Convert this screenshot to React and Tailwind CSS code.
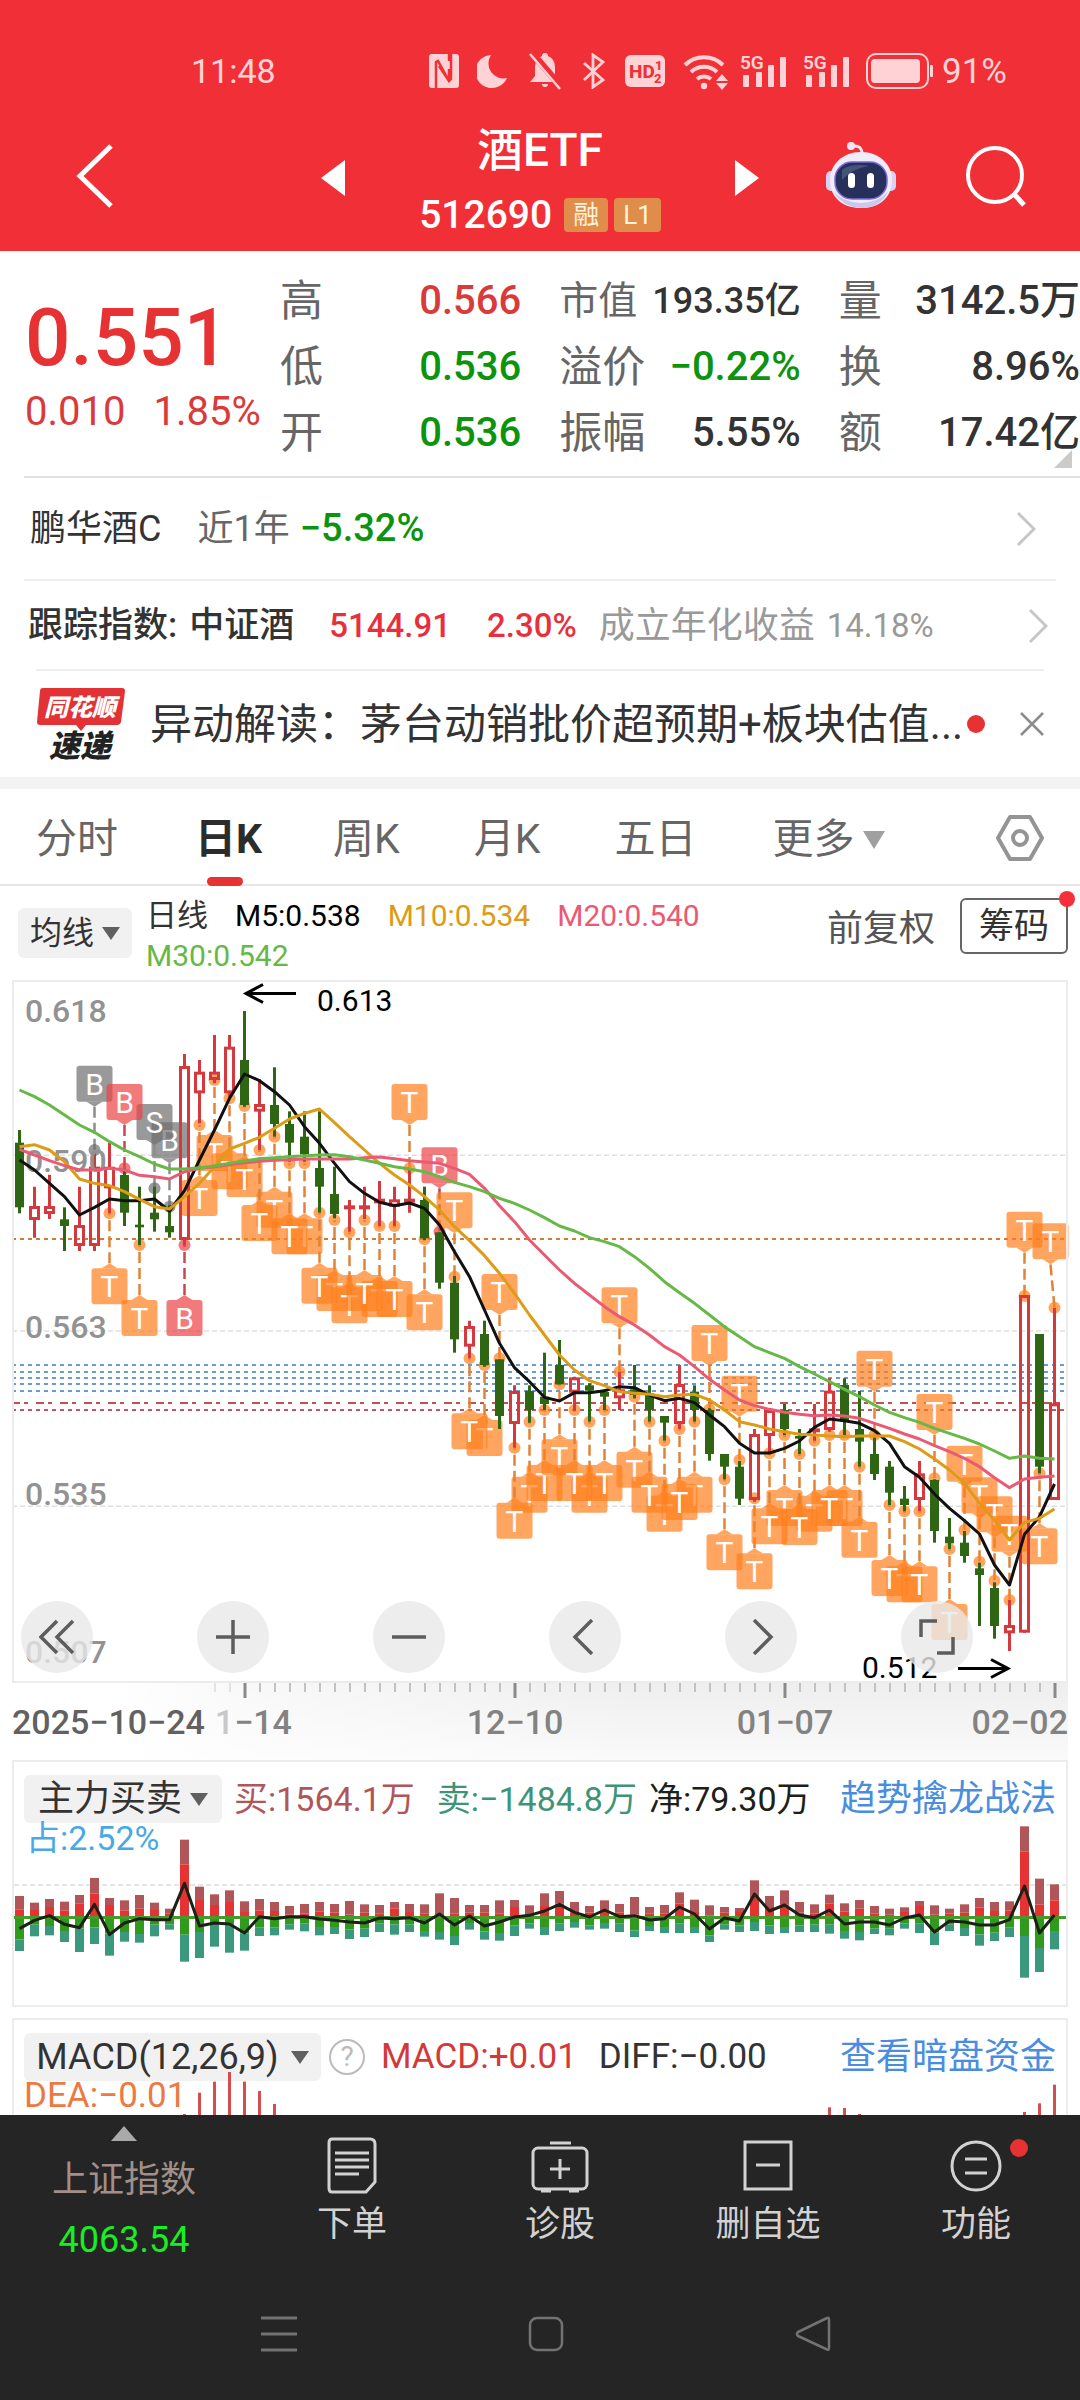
import React from "react";

const STEP = 15;
const X0 = 19.5;
const cx = (i) => X0 + i * STEP;

// Chart values are stored as vertical units, three to a pixel.
const u = (v) => v / 3;

// [rising, high, body top, body bottom, low]
const CANDLES = [
  [0, 480, 518, 712, 730], [1, 650, 708, 750, 803], [1, 614, 708, 732, 747], [0, 712, 748, 768, 843],
  [1, 650, 765, 828, 843], [1, 545, 590, 828, 843], [1, 518, 590, 655, 730], [0, 595, 615, 728, 768],
  [0, 650, 764, 772, 825], [0, 650, 728, 748, 785], [0, 705, 768, 787, 803], [1, 252, 288, 810, 825],
  [1, 270, 305, 370, 460], [1, 195, 305, 330, 340], [1, 195, 230, 370, 385], [0, 123, 270, 405, 410],
  [1, 328, 402, 425, 540], [0, 292, 405, 462, 500], [0, 424, 462, 518, 575], [0, 424, 500, 553, 575],
  [0, 424, 594, 650, 728], [0, 590, 672, 732, 745], [1, 690, 706, 716, 785], [1, 650, 706, 716, 747],
  [1, 633, 686, 700, 768], [1, 650, 688, 710, 768], [1, 595, 686, 698, 728], [0, 650, 690, 805, 810],
  [0, 787, 787, 938, 956], [0, 918, 938, 1108, 1148], [1, 1052, 1068, 1130, 1165], [0, 1052, 1092, 1185, 1190],
  [0, 1168, 1168, 1338, 1377], [1, 1246, 1263, 1362, 1433], [0, 1246, 1263, 1320, 1358], [0, 1148, 1280, 1302, 1320],
  [0, 1110, 1185, 1243, 1243], [1, 1220, 1222, 1268, 1322], [0, 1240, 1246, 1262, 1355], [0, 1258, 1266, 1280, 1320],
  [1, 1205, 1258, 1285, 1320], [0, 1185, 1258, 1275, 1285], [0, 1246, 1270, 1320, 1355], [0, 1338, 1338, 1358, 1412],
  [1, 1185, 1242, 1362, 1377], [0, 1246, 1265, 1320, 1355], [0, 1315, 1320, 1452, 1472], [0, 1452, 1452, 1490, 1528],
  [0, 1473, 1490, 1586, 1605], [1, 1377, 1392, 1590, 1595], [1, 1320, 1320, 1398, 1450], [0, 1302, 1320, 1377, 1395],
  [0, 1377, 1398, 1406, 1452], [1, 1302, 1375, 1382, 1412], [1, 1225, 1262, 1380, 1385], [0, 1225, 1245, 1355, 1395],
  [0, 1263, 1377, 1415, 1490], [0, 1402, 1452, 1512, 1530], [0, 1473, 1490, 1568, 1605], [0, 1548, 1586, 1605, 1624],
  [1, 1473, 1510, 1590, 1624], [0, 1528, 1530, 1683, 1718], [0, 1644, 1700, 1720, 1737], [0, 1683, 1718, 1758, 1778],
  [0, 1778, 1795, 1815, 1968], [0, 1837, 1854, 1968, 2006], [1, 1890, 1965, 1990, 2043], [1, 975, 975, 1988, 1988],
  [0, 1092, 1092, 1490, 1510], [1, 1013, 1300, 1590, 1590],
];

// [index, anchor, letter, tone, side, horizontal nudge of the flag]; later entries lie on top
const MARKERS = [
  [13, 330], [14, 385], [17, 500], [19, 580], [21, 750], [22, 787], [24, 768], [31, 1185], [34, 1355], [38, 1355],
  [43, 1412], [45, 1355], [53, 1412], [55, 1395], [59, 1624], [60, 1624],
  [10, 710, "B", "gray", "up"], [9, 655, "S", "gray", "up"], [5, 540, "B", "gray", "up"], [7, 595, "B", "red", "up"],
  [6, 730], [8, 825], [11, 825, "B", "red", "down"], [12, 465], [15, 408],
  [16, 540], [18, 580], [20, 728], [23, 750], [25, 768], [27, 808],
  [26, 595, "T", "orange", "up"], [28, 785, "B", "red", "up"], [29, 920, "T", "orange", "up"], [32, 1165, "T", "orange", "up"],
  [30, 1165], [33, 1433], [35, 1320], [36, 1243], [37, 1320], [39, 1320],
  [40, 1205, "T", "orange", "up"], [41, 1280], [42, 1355], [44, 1377],
  [46, 1318, "T", "orange", "up"], [47, 1528], [48, 1470, "T", "orange", "up"], [49, 1585], [51, 1395], [50, 1450],
  [52, 1452], [54, 1395], [56, 1490], [57, 1395, "T", "orange", "up"], [58, 1605],
  [61, 1525, "T", "orange", "up"], [62, 1737], [63, 1680, "T", "orange", "up"], [64, 1775, "T", "orange", "up"],
  [65, 1832, "T", "orange", "up"], [66, 1890, "T", "orange", "up"], [67, 978, "T", "orange", "up"], [68, 1510],
  [69, 1013, "T", "orange", "up", -4],
];

const TONES = { orange: "#ff7f1d", red: "#ec4045", gray: "#6e6e6e" };
const STEMS = { orange: "#e08238", red: "#c9454f", gray: "#8d8d8d" };

const MA5 = [570, 600, 640, 680, 735, 712, 687, 692, 692, 687, 723, 662, 570, 480, 385, 312, 332, 365, 405, 470, 520, 580, 635, 670, 697, 707, 699, 715, 765, 845, 920, 1020, 1120, 1193, 1235, 1282, 1293, 1268, 1268, 1262, 1250, 1253, 1275, 1292, 1285, 1298, 1335, 1370, 1420, 1449, 1449, 1435, 1413, 1372, 1347, 1352, 1360, 1382, 1420, 1490, 1522, 1572, 1615, 1652, 1692, 1785, 1845, 1693, 1640, 1542];
const MA10 = [530, 524, 540, 575, 627, 640, 647, 665, 688, 710, 717, 680, 640, 590, 537, 520, 502, 475, 447, 430, 417, 458, 500, 540, 580, 615, 645, 680, 720, 770, 812, 857, 910, 970, 1035, 1095, 1155, 1200, 1232, 1247, 1265, 1270, 1273, 1280, 1275, 1273, 1290, 1320, 1355, 1365, 1377, 1385, 1393, 1395, 1398, 1400, 1398, 1398, 1398, 1415, 1437, 1467, 1500, 1540, 1600, 1650, 1710, 1657, 1645, 1617];
const MA20 = [538, 555, 572, 587, 600, 600, 595, 600, 616, 620, 627, 605, 595, 590, 584, 578, 574, 571, 569, 567, 567, 567, 567, 563, 561, 566, 572, 576, 580, 595, 613, 655, 707, 755, 810, 855, 900, 940, 975, 1010, 1040, 1065, 1095, 1130, 1155, 1190, 1228, 1260, 1290, 1307, 1318, 1327, 1333, 1337, 1335, 1338, 1345, 1360, 1375, 1392, 1407, 1427, 1445, 1465, 1490, 1523, 1553, 1527, 1522, 1518];
const MA30 = [360, 380, 405, 435, 465, 487, 515, 540, 560, 582, 597, 597, 593, 588, 580, 573, 566, 563, 560, 557, 555, 554, 560, 570, 580, 590, 597, 605, 620, 637, 650, 665, 685, 700, 720, 743, 768, 783, 803, 815, 830, 860, 895, 935, 968, 1000, 1035, 1070, 1100, 1130, 1148, 1165, 1190, 1212, 1235, 1258, 1280, 1305, 1327, 1343, 1357, 1375, 1390, 1405, 1422, 1443, 1465, 1458, 1465, 1467];

// [buy top, large buy top, large sell bottom, sell bottom]
const FLOWS = [
  [462, 502, 592, 627], [482, 504, 548, 583], [471, 495, 552, 580], [479, 505, 567, 600], [459, 484, 560, 630],
  [408, 455, 556, 606], [468, 489, 575, 641], [475, 505, 570, 599], [459, 500, 576, 602], [482, 504, 548, 583],
  [500, 514, 547, 563], [293, 367, 578, 659], [434, 474, 570, 648], [457, 489, 545, 614], [445, 480, 548, 632],
  [478, 510, 574, 626], [471, 505, 557, 582], [480, 507, 557, 580], [492, 518, 548, 563], [486, 514, 545, 568],
  [480, 508, 555, 580], [486, 512, 555, 576], [477, 518, 562, 591], [487, 512, 560, 585], [489, 514, 545, 570],
  [480, 499, 547, 578], [486, 510, 548, 570], [487, 514, 567, 584], [454, 520, 570, 593], [468, 515, 582, 609],
  [489, 512, 543, 563], [489, 512, 568, 593], [475, 514, 573, 596], [474, 495, 550, 582], [490, 518, 545, 560],
  [454, 492, 555, 579], [447, 485, 545, 567], [480, 512, 540, 557], [492, 512, 550, 563], [475, 505, 543, 560],
  [486, 512, 545, 570], [465, 518, 565, 585], [495, 514, 552, 567], [489, 514, 555, 573], [451, 485, 545, 573],
  [473, 510, 555, 573], [490, 520, 580, 600], [495, 512, 548, 563], [498, 510, 550, 570], [415, 465, 540, 567],
  [462, 495, 550, 576], [445, 487, 555, 573], [480, 512, 550, 570], [487, 514, 548, 570], [458, 484, 548, 575],
  [484, 508, 567, 590], [474, 500, 570, 595], [492, 514, 560, 576], [500, 518, 560, 580], [496, 510, 545, 560],
  [477, 492, 545, 573], [490, 518, 572, 609], [500, 514, 548, 567], [487, 512, 558, 582], [468, 497, 577, 611],
  [480, 507, 572, 597], [478, 505, 557, 585], [253, 328, 582, 707], [410, 488, 618, 690], [427, 475, 567, 622],
];
const NET = [560, 535, 521, 547, 557, 487, 578, 543, 530, 533, 533, 424, 552, 543, 546, 573, 524, 530, 524, 524, 531, 535, 540, 543, 528, 530, 527, 543, 516, 549, 522, 552, 540, 525, 520, 507, 487, 511, 525, 504, 524, 521, 534, 530, 495, 516, 561, 528, 537, 456, 507, 489, 519, 527, 504, 546, 540, 540, 549, 528, 519, 570, 537, 540, 549, 549, 533, 432, 573, 519];

// [index, bar top]
const MACD = [[11, 1122], [12, 1058], [13, 1025], [14, 996], [15, 1025], [16, 1053], [17, 1092], [54, 1102], [55, 1104], [56, 1122], [67, 1116], [68, 1090], [69, 1034]];

const toPoints = (arr) => arr.map((v, i) => `${cx(i)},${u(v)}`).join(" ");

function Marker({ i, y, letter = "T", tone = "orange", side = "down", nudge = 0 }) {
  const x = cx(i);
  const bx = x + nudge;
  const dot = u(y);
  const top = side === "up" ? u(y - 253) : u(y + 165);
  const tip = side === "up" ? top + 41 : top - 5;
  const base = side === "up" ? top + 36 : top;
  return (
    <g>
      <line x1={bx} y1={tip} x2={x} y2={dot} stroke={STEMS[tone]} strokeWidth="2.5" strokeDasharray="11 5" />
      <g fill={TONES[tone]} fillOpacity="0.7">
        <circle cx={x} cy={dot} r="6" />
        <rect x={bx - 18} y={top} width="36" height="36" rx="3" />
        <path d={`M${bx - 8} ${base}H${bx + 8}L${bx} ${tip}Z`} />
      </g>
      <text x={bx} y={top + 29} fontSize="30" fill="#fff" textAnchor="middle">{letter}</text>
    </g>
  );
}

function Candle({ i, c }) {
  const [up, hi, top, bottom, lo] = c;
  const x = cx(i);
  if (!up) {
    return (
      <g fill="#2f6614">
        <rect x={x - 1.5} y={u(hi)} width="3" height={u(lo - hi)} />
        <rect x={x - 4.5} y={u(top)} width="9" height={u(bottom - top)} />
      </g>
    );
  }
  return (
    <g stroke="#d4393d" strokeWidth="3" fill="none">
      <path d={`M${x} ${u(hi)}V${u(top) + 1}M${x} ${u(bottom) - 1}V${u(lo)}`} />
      <rect x={x - 4} y={u(top) + 1.5} width="8" height={Math.max(u(bottom - top) - 3, 1)} />
    </g>
  );
}

function MainChart() {
  return (
    <svg viewBox="12 10 1056 703" className="block w-full h-auto overflow-visible" fontFamily="Roboto, 'Noto Sans CJK SC', sans-serif" role="img" aria-label="日K线">
      {[556, 1083, 1609].map((v) => (
        <line key={v} x1="12" x2="1066" y1={u(v)} y2={u(v)} stroke="#dfdfdf" strokeWidth="1.5" strokeDasharray="5 3" />
      ))}
      <line x1="12" x2="1066" y1={u(807)} y2={u(807)} stroke="#cf7a37" strokeWidth="2" strokeDasharray="4 4" />
      {[1185, 1206, 1224, 1242, 1263].map((v) => (
        <line key={v} x1="12" x2="1066" y1={u(v)} y2={u(v)} stroke="#6d9bcf" strokeWidth="2" strokeDasharray="4 4" />
      ))}
      <line x1="12" x2="1066" y1={u(1299)} y2={u(1299)} stroke="#c3524c" strokeWidth="2" strokeDasharray="8 4 4 8" />
      <line x1="12" x2="1066" y1={u(1320)} y2={u(1320)} stroke="#c0575c" strokeWidth="2" strokeDasharray="4 4" />
      {MARKERS.map(([i, y, letter, tone, side, nudge]) => (
        <Marker key={i} i={i} y={y} letter={letter} tone={tone} side={side} nudge={nudge} />
      ))}
      {CANDLES.map((c, i) => <Candle key={i} i={i} c={c} />)}
      <g fontSize="32" fontWeight="500" fill="#929292">
        <text x="25" y="52">0.618</text>
        <text x="25" y="202">0.590</text>
        <text x="25" y="368">0.563</text>
        <text x="25" y="535">0.535</text>
        <text x="25" y="693">0.507</text>
      </g>
      <g fill="none" strokeWidth="3" strokeLinejoin="round">
        <polyline points={toPoints(MA5)} stroke="#111" />
        <polyline points={toPoints(MA10)} stroke="#dd9b16" />
        <polyline points={toPoints(MA20)} stroke="#ea5a72" />
        <polyline points={toPoints(MA30)} stroke="#66b847" />
      </g>
      <g fontSize="30" fill="#000">
        <text x="317" y="41">0.613</text>
        <text x="862" y="708">0.512</text>
      </g>
      <g stroke="#000" strokeWidth="3" fill="none">
        <path d="M296 23.500H246M263 14.500L246 23.500L263 32.500" />
        <path d="M958 698.500H1008M991 689.500L1008 698.500L991 707.500" />
      </g>
      <rect x="13" y="11" width="1054" height="701" fill="none" stroke="#ececec" strokeWidth="2" />
    </svg>
  );
}

function RoundButton({ label, d }) {
  return (
    <button aria-label={label} className="size-18 rounded-full bg-[#e9e9e9]/80 flex items-center justify-center">
      <svg viewBox="0 0 36 36" className="size-9" fill="none" stroke="#5d5d5d" strokeWidth="3.500"><path d={d} /></svg>
    </button>
  );
}

function Ticks() {
  const items = [];
  for (let i = 13; i < 70; i++) {
    const major = (i - 15) % 18 === 0;
    items.push(
      <line key={i} x1={cx(i) + 0.5} x2={cx(i) + 0.5} y1="0" y2={major ? 15 : 9} stroke={major ? "#8a8a8a" : "#c2c2c2"} strokeWidth={major ? 3 : 2} opacity={i < 15 ? 0.4 : 1} />
    );
  }
  return <svg viewBox="12 0 1056 15" className="block w-full h-auto">{items}</svg>;
}

function Caret({ className = "" }) {
  return (
    <svg viewBox="0 0 18 13" className={"w-[18px] h-[13px] " + className} fill="currentColor"><path d="M0 0H18L9 13Z" /></svg>
  );
}

function BigCaret() {
  return (
    <svg viewBox="0 0 22 18" className="w-[22px] h-[18px]" fill="#a0a0a0"><path d="M0 0H22L11 18Z" /></svg>
  );
}

function Chevron() {
  return (
    <svg viewBox="0 0 20 36" className="w-5 h-9" fill="none" stroke="#c6c6c6" strokeWidth="3"><path d="M2 2L18 18L2 34" /></svg>
  );
}

function Signal() {
  return (
    <svg viewBox="0 0 48 34" className="w-12 h-[34px] overflow-visible" fill="#ffd3d5">
      <text x="0" y="15" fontSize="19" fontWeight="600" fontFamily="Roboto, sans-serif">5G</text>
      <rect x="3" y="21" width="6" height="12" rx="1" />
      <rect x="16" y="18" width="6" height="15" rx="1" />
      <rect x="28" y="11" width="6" height="22" rx="1" />
      <rect x="40" y="3" width="6" height="30" rx="1" />
    </svg>
  );
}

function StatusBar() {
  return (
    <div className="flex items-center justify-between pl-[191px] pr-[73px] pt-12 h-[94px] text-[#ffd3d5]">
      <span className="text-[34px] leading-none">11:48</span>
      <div className="flex items-center">
        <svg viewBox="0 0 30 34" className="w-[30px] h-[34px] mr-[18px]"><rect width="30" height="34" rx="3" fill="#ffd3d5" /><path d="M7 34V8L9 7L20 27V15M20 0V7M22 0V25L20 27L10 12" fill="none" stroke="#f12f37" strokeWidth="2.500" /></svg>
        <svg viewBox="0 0 30 34" className="w-[30px] h-[34px] mr-[22px]"><path d="M14 1A16.500 16.500 0 1 0 30 24A15 15 0 0 1 14 1Z" fill="#ffd3d5" /></svg>
        <svg viewBox="0 0 34 38" className="w-[34px] h-[38px] mr-5" fill="#ffd3d5"><path d="M16 1A3 3 0 0 0 13 4Q6 7 6 15V24L1 30H30L26 24V15Q26 7 19 4A3 3 0 0 0 16 1ZM13 32H19A3 3 0 0 1 13 32Z" /><path d="M3 1L34 37" stroke="#f12f37" strokeWidth="7" /><path d="M1 2L31 37" stroke="#ffd3d5" strokeWidth="2.500" /></svg>
        <svg viewBox="0 0 22 36" className="w-[22px] h-9 mr-5" fill="none" stroke="#ffd3d5" strokeWidth="2.800"><path d="M1 10L20 27L10 34V2L20 9L1 27" /></svg>
        <svg viewBox="0 0 40 32" className="w-10 h-8 mr-[18px]"><rect width="40" height="32" rx="6" fill="#ffd3d5" /><g fill="#f12f37" fontFamily="Roboto, sans-serif" fontWeight="800"><text x="4" y="23" fontSize="19">HD</text><text x="30" y="15" fontSize="13">1</text><text x="29" y="28" fontSize="13">2</text></g></svg>
        <svg viewBox="0 0 46 38" className="w-[46px] h-[38px] mr-[11px]" fill="none" stroke="#ffd3d5" strokeWidth="4"><path d="M2 13A27 27 0 0 1 40 13M8 20A19 19 0 0 1 34 20M14 27A11 11 0 0 1 28 27" /><circle cx="21" cy="34" r="3.200" fill="#ffd3d5" stroke="none" /><path d="M33 29L39 22L45 29ZM33 31L39 38L45 31Z" fill="#ffd3d5" stroke="none" /></svg>
        <span className="mr-[15px]"><Signal /></span>
        <span className="mr-[15px]"><Signal /></span>
        <svg viewBox="0 0 68 36" className="w-[68px] h-9 mr-2"><rect x="1" y="1" width="61" height="34" rx="9" fill="none" stroke="#ffd3d5" strokeWidth="2" /><rect x="5" y="6" width="49" height="24" rx="4" fill="#ffd3d5" /><rect x="64" y="12" width="3" height="12" rx="1" fill="#ffd3d5" /></svg>
        <span className="text-[35px] leading-none">91%</span>
      </div>
    </div>
  );
}

function Robot() {
  return (
    <svg viewBox="0 0 72 68" className="w-[72px] h-[68px]">
      <path d="M37 12Q37 3 28 4" fill="none" stroke="#f7e4f4" strokeWidth="3" />
      <circle cx="26" cy="4" r="4" fill="#f7e4f4" />
      <rect x="1" y="29" width="12" height="20" rx="5" fill="#d9d2f2" />
      <rect x="59" y="29" width="12" height="20" rx="5" fill="#d9d2f2" />
      <path d="M36 10C55 10 67 23 67 38C67 56 54 66 36 66S5 56 5 38C5 23 17 10 36 10Z" fill="#f0ecfa" />
      <path d="M9 50Q18 65 36 66T63 50Q52 61 36 61T9 50Z" fill="#cbc8ee" />
      <rect x="10" y="20" width="52" height="37" rx="17" fill="#26305a" stroke="#7b6bd6" strokeWidth="1.500" />
      <path d="M17 28Q26 21 44 24Q28 26 17 38Z" fill="#43537a" />
      <rect x="23" y="31" width="7" height="15" rx="3.500" fill="#fff" />
      <rect x="42" y="31" width="7" height="15" rx="3.500" fill="#fff" />
    </svg>
  );
}

function Header() {
  return (
    <header className="bg-[#f12f37] text-white">
      <StatusBar />
      <div className="grid grid-cols-[1fr_auto_1fr] items-center h-[157px]">
        <div className="flex items-center justify-between pl-[76px] pt-1.5">
          <button aria-label="返回"><svg viewBox="0 0 38 64" className="w-[38px] h-16" fill="none" stroke="#fff" strokeWidth="5"><path d="M35 2L4 32L35 62" /></svg></button>
          <button aria-label="上一只" className="pt-1"><svg viewBox="0 0 24 36" className="w-6 h-9" fill="#fff"><path d="M24 0V36L0 18Z" /></svg></button>
        </div>
        <div className="w-[390px] flex flex-col items-center pt-3.5">
          <h1 className="text-[46px] leading-[58px] font-medium">酒ETF</h1>
          <div className="flex items-center gap-1.5 mt-3">
            <span className="text-[39px] leading-[48px] font-medium mr-1.5">512690</span>
            <span className="h-[34px] px-[9px] rounded-sm bg-[#e08c4b] text-[26px] leading-[34px] text-[#fff3dc]">融</span>
            <span className="h-[34px] px-[9px] rounded-sm bg-[#e08c4b] text-[26px] leading-[34px] text-[#fff3dc]">L1</span>
          </div>
        </div>
        <div className="flex items-center justify-between pr-[53px] pt-1.5">
          <button aria-label="下一只" className="pt-1"><svg viewBox="0 0 24 36" className="w-6 h-9" fill="#fff"><path d="M0 0V36L24 18Z" /></svg></button>
          <div className="flex items-center gap-[68px]">
            <button aria-label="智能助手"><Robot /></button>
            <button aria-label="搜索"><svg viewBox="0 0 62 62" className="size-[62px]" fill="none" stroke="#fff" strokeWidth="4"><circle cx="30" cy="30" r="27" /><path d="M49 49L59 60" strokeWidth="5" /></svg></button>
          </div>
        </div>
      </div>
    </header>
  );
}

function Stat({ label, value, tone, small }) {
  return (
    <div className="flex items-center justify-between h-[66px] whitespace-nowrap">
      <dt className={(small ? "text-[39px]" : "text-[43px]") + " leading-none text-[#666]"}>{label}</dt>
      <dd className={(small ? "text-[36px] " : "text-[40px] ") + "leading-none font-medium " + tone}>{value}</dd>
    </div>
  );
}

function Quote() {
  return (
    <section className="relative flex pt-[17px] pb-2.5">
      <div className="w-[280px] shrink-0 pl-[25px] pt-[30px] text-[#d93a3a] whitespace-nowrap">
        <div className="text-[80px] leading-[80px] font-medium text-[#e63232]">0.551</div>
        <div className="flex gap-7 text-[40px] leading-[48px] mt-2.5">
          <span>0.010</span><span>1.85%</span>
        </div>
      </div>
      <dl className="flex-1 grid grid-cols-3 gap-x-[38px]">
        <Stat label="高" value="0.566" tone="text-[#d93a3a]" />
        <Stat label="市值" value="193.35亿" tone="text-[#333]" small />
        <Stat label="量" value="3142.5万" tone="text-[#333]" />
        <Stat label="低" value="0.536" tone="text-[#0d930d]" />
        <Stat label="溢价" value="−0.22%" tone="text-[#0d930d]" />
        <Stat label="换" value="8.96%" tone="text-[#333]" />
        <Stat label="开" value="0.536" tone="text-[#0d930d]" />
        <Stat label="振幅" value="5.55%" tone="text-[#333]" />
        <Stat label="额" value="17.42亿" tone="text-[#333]" />
      </dl>
      <svg viewBox="0 0 18 18" className="absolute right-2 bottom-2 size-[18px]" fill="#cbcbcb"><path d="M18 0V18H0Z" /></svg>
    </section>
  );
}

function NewsLogo() {
  return (
    <svg viewBox="0 0 90 74" className="w-[90px] h-[74px] shrink-0 overflow-visible" fontFamily="'Noto Sans CJK SC', sans-serif" fontWeight="900" fontStyle="italic">
      <path d="M7 1H86Q89 1 89 4L85 35Q84 38 81 38H50L45 44L40 38H4Q1 38 1 35L4 4Q4 1 7 1Z" fill="#e33236" />
      <text x="44" y="29" fontSize="24" fill="#fff" textAnchor="middle">同花顺</text>
      <text x="44" y="70" fontSize="31" fill="#222" textAnchor="middle">速递</text>
    </svg>
  );
}

function InfoRows() {
  return (
    <section>
      <a href="#fund" className="flex items-center ml-6 pl-1.5 pr-11 h-[103px] border-t-2 border-[#e2e2e2] text-[36px] text-[#333]">
        <span>鹏华酒C</span>
        <span className="ml-9 text-[#666]">近1年</span>
        <span className="ml-2.5 text-[38px] font-medium text-[#0d930d]">−5.32%</span>
        <span className="ml-auto"><Chevron /></span>
      </a>
      <a href="#index" className="flex items-center mx-6 pl-1 pr-2 pt-0.5 h-[90px] border-t-2 border-[#eeeeee] text-[36px] text-[#333] whitespace-nowrap">
        <span className="text-[35px] font-medium">跟踪指数:</span>
        <span className="ml-3 text-[35px] font-medium">中证酒</span>
        <span className="ml-[35px] text-[33px] font-medium text-[#e8303c]">5144.91</span>
        <span className="ml-9 text-[33px] font-medium text-[#e8303c]">2.30%</span>
        <span className="ml-[22px] text-[#999]">成立年化收益</span>
        <span className="ml-3 text-[33px] text-[#999]">14.18%</span>
        <span className="ml-auto"><Chevron /></span>
      </a>
      <div className="flex items-center mx-9 h-[108px] border-t-2 border-[#eeeeee] text-[#333]">
        <NewsLogo />
        <a href="#news" className="ml-6 text-[42px] whitespace-nowrap">异动解读：茅台动销批价超预期+板块估值...</a>
        <span className="ml-1 size-[18px] shrink-0 rounded-full bg-[#e63232]" />
        <button aria-label="关闭" className="ml-auto"><svg viewBox="0 0 24 24" className="size-6" fill="none" stroke="#8c8c8c" strokeWidth="2.500"><path d="M1 1L23 23M23 1L1 23" /></svg></button>
      </div>
    </section>
  );
}

function Tabs() {
  return (
    <nav className="flex items-center h-[97px] border-t-[12px] border-[#f3f3f3] box-content pl-9 pr-9 text-[41px] leading-none text-[#666] shadow-[inset_0_-2px_0_#e6e6e6] whitespace-nowrap">
      <button className="mr-[77px] pt-1">分时</button>
      <button className="relative self-stretch mr-[71px] pt-1 font-bold text-[#2c2c2c]">
        日K
        <span className="absolute bottom-0 left-3 w-9 h-[9px] rounded-full bg-[#e63232]" />
      </button>
      <button className="mr-[74px] pt-1">周K</button>
      <button className="mr-[74px] pt-1">月K</button>
      <button className="mr-[76px] pt-1">五日</button>
      <button className="flex items-center gap-2 pt-1">更多<BigCaret /></button>
      <button aria-label="设置" className="ml-auto"><svg viewBox="0 0 48 46" className="w-12 h-[46px]" fill="none" stroke="#949494" strokeWidth="4" strokeLinejoin="round"><path d="M14 2H34L46 23L34 44H14L2 23Z" /><circle cx="24" cy="23" r="7" /></svg></button>
    </nav>
  );
}

function Legend() {
  return (
    <div className="flex items-start h-[94px] pl-[18px] pr-3 whitespace-nowrap">
      <button className="mt-[22px] h-[50px] w-[114px] flex items-center justify-center gap-2 rounded-md bg-[#f1f1f1] text-[32px] text-[#333]">均线<Caret className="text-[#606060]" /></button>
      <div className="ml-3.5 mt-2.5 w-[570px] flex flex-wrap gap-x-[27px] text-[30px] leading-10 text-black">
        <span className="text-[31px] text-[#333]">日线</span>
        <span>M5:0.538</span>
        <span className="text-[#dd9b16]">M10:0.534</span>
        <span className="text-[#ea5a72]">M20:0.540</span>
        <span className="text-[#66b847]">M30:0.542</span>
      </div>
      <button className="ml-auto mt-4 h-[54px] text-[36px] leading-none text-[#555]">前复权</button>
      <button className="relative ml-[25px] mt-3 h-14 w-[108px] rounded-md border-2 border-[#666] text-[35px] leading-none text-[#333]">
        筹码
        <span className="absolute -top-[9px] -right-[9px] size-4 rounded-full bg-[#f5303b]" />
      </button>
    </div>
  );
}

function DateAxis() {
  return (
    <div className="bg-linear-to-b from-[#eeeeee] to-[#fafafa] h-[77px]">
      <div className="h-full bg-linear-to-r from-white from-10% via-white/60 via-22% to-transparent to-60%">
        <Ticks />
        <div className="grid grid-cols-[368px_270px_270px_1fr] items-center text-[34px] leading-[48px] font-medium text-[#828282]">
          <div className="flex"><span className="text-[#616161]">2025−10−24</span><span className="ml-2.5 text-[#c8c8c8]">1</span><span>−14</span></div>
          <span className="text-center">12−10</span>
          <span className="text-center">01−07</span>
          <span className="text-right">02−02</span>
        </div>
      </div>
    </div>
  );
}

function FlowPanel() {
  return (
    <section className="grid border-2 border-[#ececec] h-[247px] bg-white">
      <div className="col-start-1 row-start-1">
        <svg viewBox="14 20 1052 228" className="block w-full h-auto" role="img" aria-label="主力买卖">
          <line x1="14" x2="1066" y1={u(429)} y2={u(429)} stroke="#e6e6e6" strokeWidth="2" strokeDasharray="5 3" />
          {FLOWS.map(([a, b, c, d], i) => (
            <g key={i}>
              <rect x={cx(i) - 4.5} y={u(a)} width="9" height={u(b - a)} fill="#b05658" />
              <rect x={cx(i) - 4.5} y={u(b)} width="9" height={u(526 - b)} fill="#e63232" />
              <rect x={cx(i) - 4.5} y={u(526)} width="9" height={u(c - 526)} fill="#2f9a1b" />
              <rect x={cx(i) - 4.5} y={u(c)} width="9" height={u(d - c)} fill="#3a987c" />
            </g>
          ))}
          <rect x="14" y={u(522)} width="1052" height="3" fill="#459b28" />
          <polyline points={toPoints(NET)} fill="none" stroke="#1c2118" strokeWidth="3" strokeLinejoin="round" />
        </svg>
      </div>
      <div className="col-start-1 row-start-1 text-[34px] whitespace-nowrap">
        <div className="flex items-center pl-2.5 pr-2.5 pt-2.5">
          <button className="h-12 w-[198px] flex items-center justify-center gap-2 rounded-md bg-[#f1f1f1] text-[36px] text-[#333]">主力买卖<Caret className="text-[#606060]" /></button>
          <span className="ml-3 text-[#b05658]">买:1564.1万</span>
          <span className="ml-[22px] text-[#3f9478]">卖:−1484.8万</span>
          <span className="ml-3 text-[#1c2118]">净:79.30万</span>
          <a href="#strategy" className="ml-auto text-[36px] text-[#4a8ddf]">趋势擒龙战法</a>
        </div>
        <div className="pl-3 leading-6 text-[#4aa8e4]">占:2.52%</div>
      </div>
    </section>
  );
}

function MacdPanel() {
  return (
    <section className="grid mt-[11px] border-2 border-b-0 border-[#ececec] h-[97px] bg-white">
      <div className="col-start-1 row-start-1 z-[1] pointer-events-none">
        <svg viewBox="14 280 1052 95" className="block w-full h-auto" role="img" aria-label="MACD">
          {MACD.map(([i, top]) => (
            <rect key={i} x={cx(i) - 1.5} y={u(top)} width="3" height={u(1125 - top)} fill="#cf3a3c" fillOpacity="0.9" />
          ))}
        </svg>
      </div>
      <div className="col-start-1 row-start-1 text-[34px] whitespace-nowrap">
        <div className="flex items-center pl-2.5 pr-2.5 pt-2.5">
          <button className="h-12 w-[297px] flex items-center justify-center gap-3 rounded-md bg-[#f1f1f1] text-[36px] text-[#333]">MACD(12,26,9)<Caret className="text-[#606060]" /></button>
          <button aria-label="指标说明" className="ml-2 size-9 rounded-full border-2 border-[#bbb] text-[28px] leading-none text-[#bbb]">?</button>
          <span className="ml-4 text-[35px] text-[#d4393a]">MACD:+0.01</span>
          <span className="ml-[22px] text-[35px] text-[#333]">DIFF:−0.00</span>
          <a href="#funds" className="ml-auto text-[36px] text-[#4a8ddf]">查看暗盘资金</a>
        </div>
        <div className="pl-2.5 text-[35px] leading-6 text-[#ea7a42]">DEA:−0.01</div>
      </div>
    </section>
  );
}

function NavItem({ label, children, badge }) {
  return (
    <button className="relative flex flex-col items-center pt-5">
      <svg viewBox="0 0 60 60" className="size-15" fill="none" stroke="#d2d2d2" strokeWidth="3">{children}</svg>
      <span className="text-[35px] leading-[52px] mt-1">{label}</span>
      {badge && <span className="absolute left-1/2 top-6 ml-[34px] size-[18px] rounded-full bg-[#e63232]" />}
    </button>
  );
}

function BottomBar() {
  return (
    <footer className="relative z-10 flex-1 flex flex-col bg-[#252525] text-[#d2d2d2]">
      <nav className="grid grid-cols-[248px_repeat(4,1fr)]">
        <a href="#sse" className="flex flex-col items-center pt-[11px]">
          <svg viewBox="0 0 26 15" className="w-[26px] h-[15px]" fill="#a9a9a9"><path d="M13 0L26 15H0Z" /></svg>
          <span className="mt-3 text-[36px] leading-[54px] text-[#a09089]">上证指数</span>
          <span className="mt-1.5 text-[36px] leading-[54px] text-[#17ee24]">4063.54</span>
        </a>
        <NavItem label="下单">
          <path d="M10 4H48Q53 4 53 9V47L44 57H10Q7 57 7 53V8Q7 4 10 4Z" />
          <path d="M13 18H47M13 25H47M13 32H47M13 39H37" />
        </NavItem>
        <NavItem label="诊股">
          <rect x="3" y="13" width="54" height="41" rx="5" />
          <path d="M20 8H41M30 24V44M20 34H40M11 56H21M39 56H49" />
        </NavItem>
        <NavItem label="删自选">
          <rect x="7" y="7" width="46" height="47" />
          <path d="M18 30H42" />
        </NavItem>
        <NavItem label="功能" badge>
          <circle cx="30" cy="31" r="24" />
          <path d="M19 24H41M19 38H41" />
        </NavItem>
      </nav>
      <div className="mt-auto flex items-center justify-between pl-[261px] pr-[249px] pb-12">
        <button aria-label="最近任务"><svg viewBox="0 0 36 36" className="size-9" fill="none" stroke="#737373" strokeWidth="3"><path d="M0 2H36M0 18H36M0 34H36" /></svg></button>
        <button aria-label="主屏幕"><svg viewBox="0 0 36 36" className="size-9" fill="none" stroke="#737373" strokeWidth="2.500"><rect x="2" y="2" width="32" height="32" rx="7" /></svg></button>
        <button aria-label="后退"><svg viewBox="0 0 36 36" className="size-9" fill="none" stroke="#737373" strokeWidth="2.500" strokeLinejoin="round"><path d="M32 2Q34 1 34 4V32Q34 35 31 33L3 20Q1 18 3 16Z" /></svg></button>
      </div>
    </footer>
  );
}

export default function App() {
  return (
    <div className="flex flex-col min-h-screen overflow-hidden bg-white [font-family:Roboto,'Noto_Sans_CJK_SC',sans-serif]">
      <Header />
      <main>
        <Quote />
        <InfoRows />
        <Tabs />
        <Legend />
        <div className="mx-3">
          <div className="relative">
            <MainChart />
            <div className="absolute inset-x-0 bottom-2.5 flex justify-between pl-[9px] pr-[95px]">
              <RoundButton label="最早" d="M18 2L2 18L18 34M34 2L18 18L34 34" />
              <RoundButton label="放大" d="M1 18H35M18 1V35" />
              <RoundButton label="缩小" d="M1 18H35" />
              <RoundButton label="左移" d="M25 1L8 18L25 35" />
              <RoundButton label="右移" d="M11 1L28 18L11 35" />
              <RoundButton label="全屏" d="M18 2H2V18M18 34H34V18" />
            </div>
          </div>
          <DateAxis />
          <FlowPanel />
          <MacdPanel />
        </div>
      </main>
      <BottomBar />
    </div>
  );
}
